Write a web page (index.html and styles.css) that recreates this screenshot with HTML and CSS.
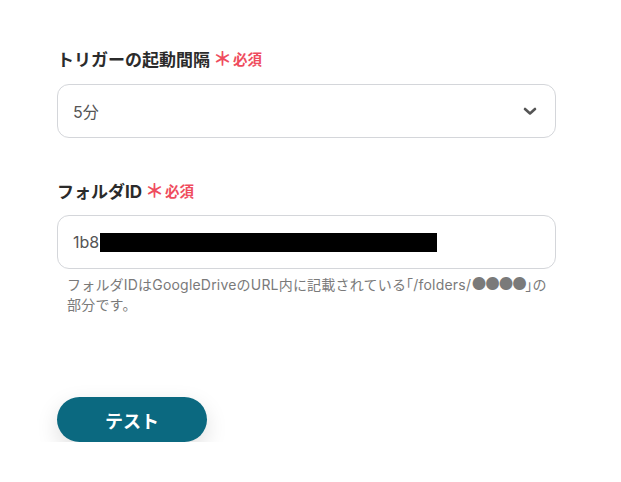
FILE: index.html
```html
<!DOCTYPE html>
<html lang="ja">
<head>
<meta charset="utf-8">
<link rel="stylesheet" href="styles.css">
</head>
<body>
<div class="page">
  <div class="field">
    <div class="label">トリガーの起動間隔<span class="req"><span class="ast">＊</span>必須</span></div>
    <div class="box select">
      <span class="value">5分</span>
      <svg class="chev" width="14" height="9" viewBox="0 0 14 9"><path d="M2 2 L7 6.5 L12 2" fill="none" stroke="#555" stroke-width="2.6" stroke-linecap="round" stroke-linejoin="round"/></svg>
    </div>
  </div>
  <div class="field second">
    <div class="label">フォルダID<span class="req"><span class="ast">＊</span>必須</span></div>
    <div class="box input">
      <span class="value">1b8</span><span class="redact"></span>
    </div>
    <p class="help">フォルダIDはGoogleDriveのURL内に記載されている<span class="br">「</span>/folders/<span class="dots">●●●●</span><span class="br">」</span>の部分です。</p>
  </div>
  <button class="btn">テスト</button>
</div>
</body>
</html>
```

FILE: styles.css
```css
html, body {
  margin: 0;
  padding: 0;
  background: #ffffff;
}
body {
  font-family: "Inter", "Noto Sans CJK JP", sans-serif;
  color: #333333;
}
.page {
  padding: 48px 0 0 57px;
  width: 499px;
}
.label {
  font-size: 17px;
  font-weight: 700;
  line-height: 24px;
  height: 24px;
  color: #2b2b2b;
  display: flex;
  align-items: center;
}
.req {
  color: #ef4c5e;
  font-size: 14.5px;
  font-weight: 700;
  margin-left: 3px;
  display: inline-flex;
  align-items: center;
}
.ast {
  font-size: 19px;
  margin-right: 1px;
}
.field .box {
  margin-top: 12px;
}
.second {
  margin-top: 42px;
}
.second .box {
  margin-top: 11px;
}
.box {
  box-sizing: border-box;
  height: 54px;
  border: 1px solid #d4d6da;
  border-radius: 12px;
  display: flex;
  align-items: center;
  padding: 0 15px;
}
.select {
  justify-content: space-between;
}
.value {
  font-size: 16px;
  color: #555555;
}
.chev {
  margin-right: 3px;
}
.redact {
  display: inline-block;
  width: 337px;
  height: 19px;
  background: #000;
  margin-left: 1px;
}
.help {
  margin: 6px 0 0 10px;
  font-size: 14px;
  line-height: 20px;
  color: #7a7a7a;
  width: 486px;
  letter-spacing: 0.2px;
}
.br {
  font-feature-settings: "halt";
}
.dots {
  font-size: 17px;
  line-height: 14px;
  letter-spacing: -2px;
}
.btn {
  margin-top: 82px;
  width: 150px;
  height: 45px;
  border: none;
  border-radius: 23px;
  background: #0b6980;
  color: #ffffff;
  font-family: "Inter", "Noto Sans CJK JP", sans-serif;
  font-size: 18px;
  font-weight: 700;
  box-shadow: 0 8px 22px rgba(0, 0, 0, 0.13);
  display: block;
}
```
